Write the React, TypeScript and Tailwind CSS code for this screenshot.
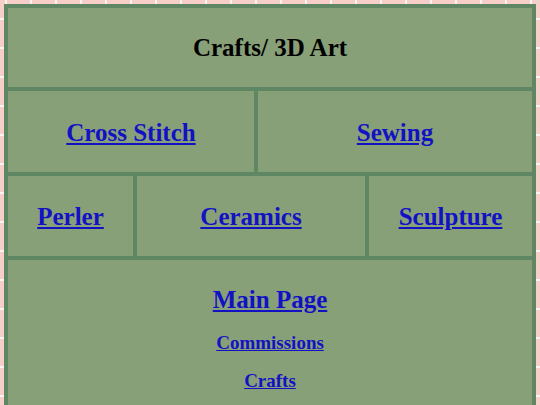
const cell = 'flex items-center justify-center bg-[#88a078]';
const link = 'font-bold text-[#1212c4] underline';

const Nav = ({ label, size = 'text-[25px]' }: { label: string; size?: string }) => (
    <a href="#" className={`${link} ${size}`}>
        {label}
    </a>
);

export default function App() {
    return (
        <div className="min-h-screen bg-[#f6cfc8] bg-[linear-gradient(to_right,rgba(255,255,255,0.8)_2px,transparent_2px),linear-gradient(to_bottom,rgba(255,255,255,0.8)_2px,transparent_2px)] bg-[size:25px_29px] bg-[position:5px_18px] p-1 font-['Liberation_Serif',serif]">
            <div className="flex flex-col gap-1 bg-[#5f8764] p-1">
                <div className={`${cell} h-[79px]`}>
                    <h2 className="text-[25px] font-bold text-black">Crafts/ 3D Art</h2>
                </div>

                <div className="grid h-[81px] grid-cols-[246px_1fr] gap-1">
                    <div className={`${cell} pt-[2px]`}>
                        <Nav label="Cross Stitch" />
                    </div>
                    <div className={`${cell} pt-[2px]`}>
                        <Nav label="Sewing" />
                    </div>
                </div>

                <div className="grid h-[80px] grid-cols-[125px_228px_1fr] gap-1">
                    <div className={`${cell} pt-[2px]`}>
                        <Nav label="Perler" />
                    </div>
                    <div className={`${cell} pt-[2px]`}>
                        <Nav label="Ceramics" />
                    </div>
                    <div className={`${cell} pt-[2px]`}>
                        <Nav label="Sculpture" />
                    </div>
                </div>

                <div className="flex h-[220px] flex-col items-center bg-[#88a078] pt-[26px] leading-[28px]">
                    <Nav label="Main Page" />
                    <div className="mt-[15px]">
                        <Nav label="Commissions" size="text-[19px]" />
                    </div>
                    <div className="mt-[9px]">
                        <Nav label="Crafts" size="text-[19px]" />
                    </div>
                </div>
            </div>
        </div>
    );
}
